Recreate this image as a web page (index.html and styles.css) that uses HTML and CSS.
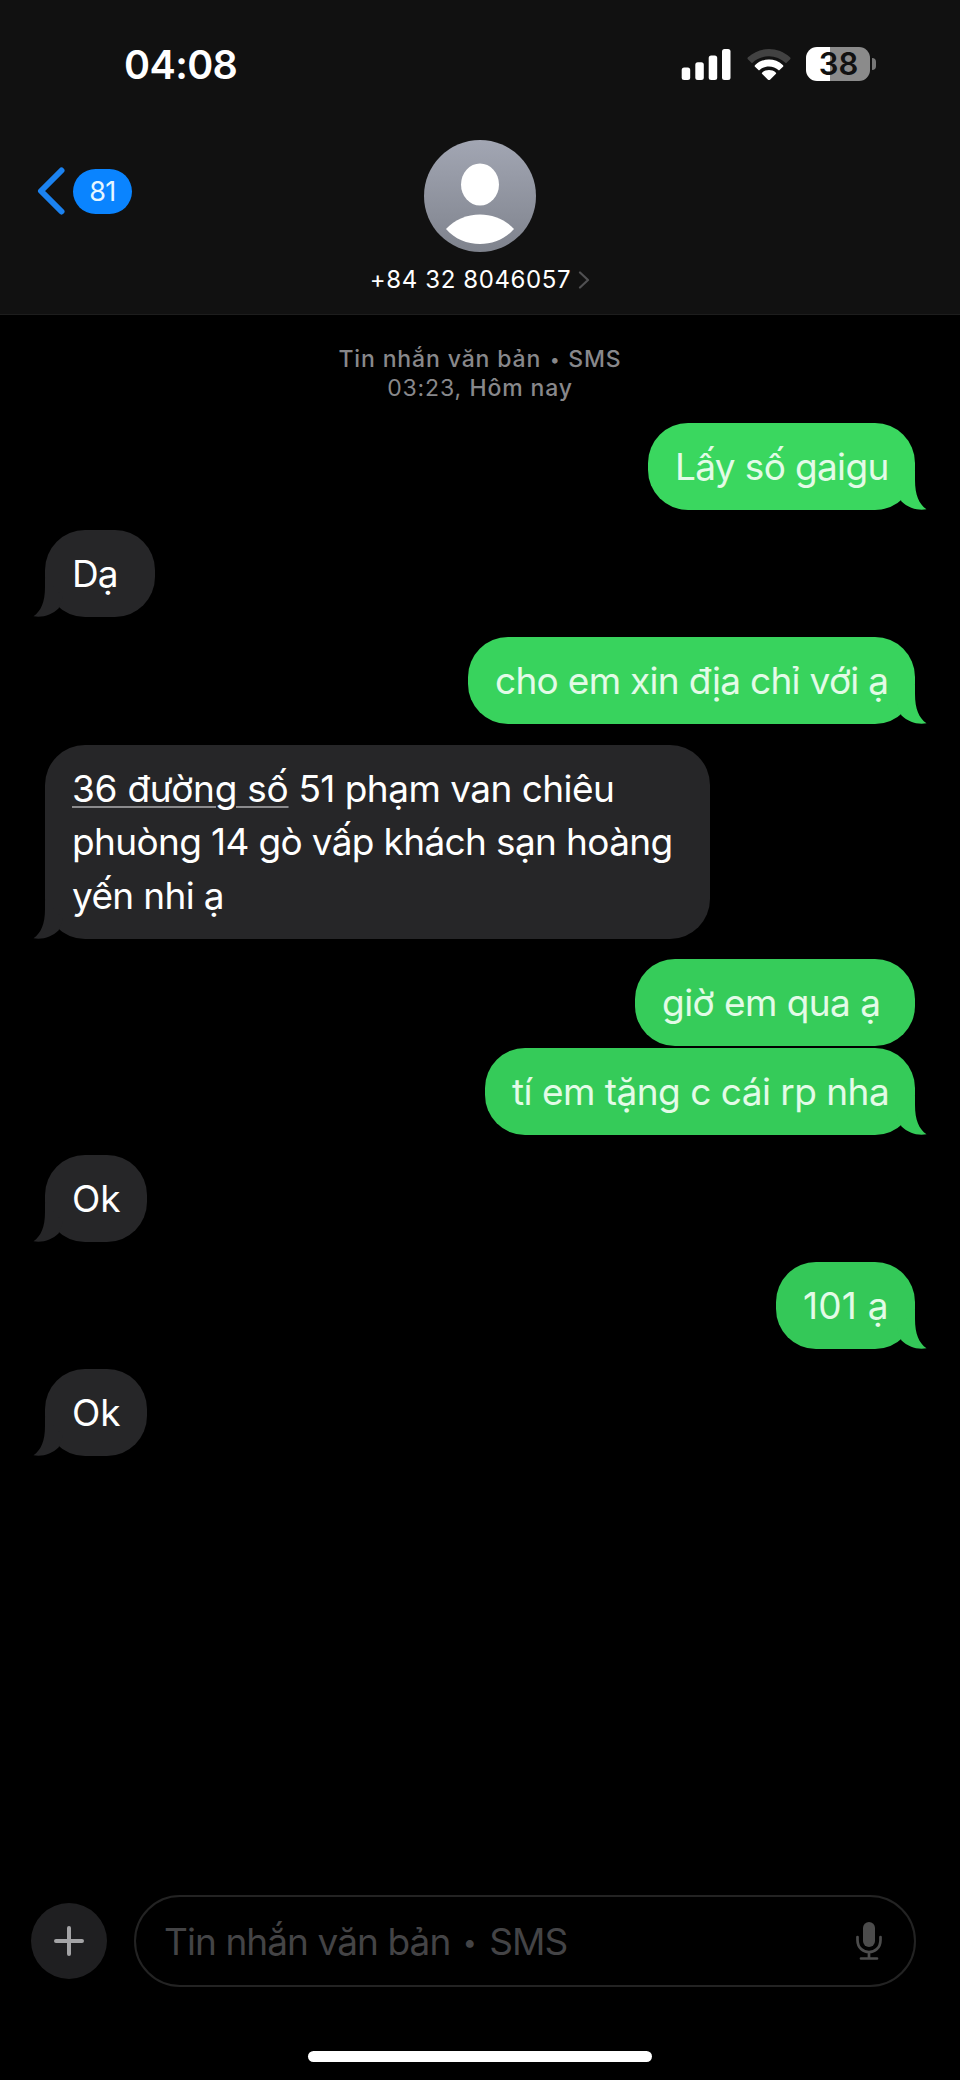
FILE: index.html
```
<!DOCTYPE html>
<html lang="vi">
<head>
<meta charset="utf-8">
<title>Tin nhắn</title>
<link rel="stylesheet" href="styles.css">
</head>
<body>
<svg width="0" height="0" class="defs" aria-hidden="true">
  <symbol id="tail" viewBox="0 0 32 40"><path d="M20 0V10C20 25 24 34 31.5 39.3C22 41 13 37.500 6.500 31.500L2 20Z"/></symbol>
</svg>
<div class="phone">
  <header class="header">
    <div class="status">
      <div class="time">04:08</div>
      <div class="indicators">
        <svg class="signal" width="50" height="32" viewBox="0 0 50 32" fill="#fff"><rect x="0.700" y="18.500" width="8.500" height="12.500" rx="2.500"/><rect x="14.300" y="13.300" width="8.500" height="17.700" rx="2.500"/><rect x="27.700" y="6.600" width="8.500" height="24.400" rx="2.500"/><rect x="41" y="0" width="8.500" height="31" rx="2.500"/></svg>
        <svg class="wifi" width="44" height="32" viewBox="0 0 44 32"><path fill="#424242" d="M5 14.200L0.800 10.200Q0 9.200 1 8.300C13-2.700 31-2.700 43 8.300Q44 9.200 43.200 10.200L39 14.200C29 5 15 5 5 14.200Z"/><path fill="#fff" d="M12 21.600L8 17.800Q7.200 16.800 8.200 15.900C16 8.600 28 8.600 35.800 15.900Q36.800 16.800 36 17.800L32 21.600C26 16 18 16 12 21.600Z"/><path fill="#fff" d="M21 30.700L15 24.700Q14.500 24 15.300 23.400C19 20.300 25 20.300 28.700 23.400Q29.500 24 29 24.700L23 30.700Q22 31.400 21 30.700Z"/></svg>
        <div class="battery"><div class="level">38</div><span class="cap"></span></div>
      </div>
    </div>
    <div class="nav">
      <div class="back">
        <svg width="28" height="48" viewBox="0 0 28 48"><path d="M24.500 3.500L4 24L24.500 44.500" fill="none" stroke="#1b82f0" stroke-width="6" stroke-linecap="round" stroke-linejoin="round"/></svg>
        <span class="count">81</span>
      </div>
      <div class="contact">
        <svg width="112" height="112" viewBox="0 0 112 112"><defs><linearGradient id="av" x2="0" y2="1"><stop stop-color="#a2a6b3"/><stop offset="1" stop-color="#7f838d"/></linearGradient></defs><circle cx="56" cy="56" r="56" fill="url(#av)"/><ellipse cx="56" cy="44.500" rx="19" ry="21" fill="#fff"/><path fill="#fff" d="M22 89C39 69.500 73 69.500 90 89C73 109 39 109 22 89Z"/></svg>
        <div class="number"><span>+84 32 8046057</span><svg width="12" height="18" viewBox="0 0 12 18"><path d="M2 1.500L10 9L2 16.500" fill="none" stroke="#505052" stroke-width="2.200" stroke-linecap="round" stroke-linejoin="round"/></svg></div>
      </div>
    </div>
  </header>
  <main class="thread">
    <div class="stamp"><span class="service">Tin nhắn văn bản <i class="dot">•</i> SMS</span><span class="date">03:23, <b>Hôm nay</b></span></div>
    <div class="bubble sent g1 w-gaigu"><span>Lấy số gaigu</span><svg class="tail"><use href="#tail"/></svg></div>
    <div class="bubble received w-da"><span>Dạ</span><svg class="tail"><use href="#tail"/></svg></div>
    <div class="bubble sent g2 w-cho"><span>cho em xin địa chỉ với ạ</span><svg class="tail"><use href="#tail"/></svg></div>
    <div class="bubble received w-address"><span class="l1"><u>36 đường số</u> 51 phạm van chiêu</span><span class="l2">phuòng 14 gò vấp khách sạn hoàng</span><span class="l3">yến nhi ạ</span><svg class="tail"><use href="#tail"/></svg></div>
    <div class="pair">
      <div class="bubble sent g3 w-gio"><span>giờ em qua ạ</span></div>
      <div class="bubble sent g4 w-ti"><span>tí em tặng c cái rp nha</span><svg class="tail"><use href="#tail"/></svg></div>
    </div>
    <div class="bubble received w-ok"><span>Ok</span><svg class="tail"><use href="#tail"/></svg></div>
    <div class="bubble sent g5 w-101"><span>101 ạ</span><svg class="tail"><use href="#tail"/></svg></div>
    <div class="bubble received w-ok"><span>Ok</span><svg class="tail"><use href="#tail"/></svg></div>
  </main>
  <footer class="composer">
    <div class="plus"><svg width="30" height="30" viewBox="0 0 30 30"><path d="M15 2V28M2 15H28" stroke="#a4a4a6" stroke-width="4" stroke-linecap="round"/></svg></div>
    <div class="field"><span>Tin nhắn văn bản <i class="dot">•</i> SMS</span><svg width="28" height="39" viewBox="0 0 28 39"><rect x="8" y="0" width="12" height="25" rx="6" fill="#4c4c4c"/><path d="M2.500 15V18C2.500 34 25.500 34 25.500 18V15M14 30V36M6 36.500H22" fill="none" stroke="#4c4c4c" stroke-width="2.700" stroke-linecap="round"/></svg></div>
  </footer>
  <div class="home"></div>
</div>
</body>
</html>
```
FILE: styles.css
```
* { box-sizing: border-box; }
body { margin: 0; background: #000; color: #fff; font-family: Inter, "Noto Sans", sans-serif; }
svg { display: block; flex: none; }
.defs { position: absolute; }
.phone { width: 960px; height: 2080px; display: flex; flex-direction: column; overflow: hidden; background: #000; }
.header { height: 315px; background: #111; border-bottom: 1px solid #1d1d1d; flex: none; }
.status { height: 140px; padding: 47px 84px 0 124px; display: flex; justify-content: space-between; align-items: flex-start; }
.time { font-size: 39.500px; line-height: 37px; font-weight: 600; letter-spacing: -0.600px; white-space: nowrap; }
.indicators { display: flex; height: 34px; }
.signal { margin-top: 2px; }
.wifi { margin: 2px 0 0 16px; }
.battery { display: flex; align-items: center; gap: 2px; margin-left: 15px; }
.level { width: 64px; height: 34px; padding-left: 1px; border-radius: 11px; background: linear-gradient(90deg, #fff 24.500px, #8b8b8b 24.500px); color: #111; font-size: 31px; line-height: 34px; font-weight: 600; text-align: center; }
.cap { width: 4px; height: 12px; border-radius: 0 5px 5px 0; background: #777; }
.nav { display: grid; grid-template-columns: 1fr 300px 1fr; }
.back { display: flex; align-items: center; height: 48px; margin: 27px 0 0 37px; gap: 8px; }
.count { width: 59px; height: 45px; border-radius: 23px; background: #0a84ff; font-size: 27px; line-height: 45px; letter-spacing: -0.500px; text-align: center; color: #e6f6ff; }
.contact { display: flex; flex-direction: column; align-items: center; }
.number { display: flex; align-items: center; gap: 7px; margin-top: 16px; font-size: 24px; line-height: 24px; letter-spacing: 0.600px; white-space: nowrap; }
.thread { flex: 1; padding: 30px 45px 0; display: flex; flex-direction: column; gap: 20.150px; }
.stamp { display: flex; flex-direction: column; align-items: center; font-size: 23px; line-height: 29px; letter-spacing: 0.870px; color: #88888b; height: 58px; white-space: nowrap; }
.service, .stamp b { font-weight: 500; }
.dot { display: inline-block; font-style: normal; line-height: 1; letter-spacing: 0; text-align: center; }
.stamp .dot { width: 13px; font-size: 18px; transform: translateY(-1.500px); }
.field .dot { width: 20px; font-size: 25px; transform: translateY(-4px); }
.bubble { position: relative; min-height: 87px; padding: 17px 27px 16.500px; border-radius: 40px; font-size: 37px; line-height: 53.500px; letter-spacing: -0.650px; white-space: nowrap; display: flex; flex-direction: column; }
.bubble > span { width: max-content; }
.sent { align-self: flex-end; background: currentColor; }
.sent > span { color: #e3fbe7; }
.received { align-self: flex-start; background: #262628; }
.tail { position: absolute; bottom: 0; width: 32px; height: 40px; }
.sent .tail { right: -12px; fill: currentColor; }
.received .tail { left: -12px; transform: scaleX(-1); fill: #262628; }
.g1 { color: #3ad75f; }
.g2 { color: #38d35d; }
.g3 { color: #36cc5a; }
.g4 { color: #35cb59; }
.g5 { color: #34c858; }
.pair { display: flex; flex-direction: column; gap: 2.300px; }
.w-gaigu { width: 267px; }
.w-da { width: 110px; letter-spacing: -1px; }
.w-cho { width: 447px; letter-spacing: -0.700px; }
.w-address { width: 665px; }
.w-gio { width: 280px; letter-spacing: -0.550px; }
.w-ti { width: 430px; letter-spacing: -0.520px; }
.w-ok { width: 102px; letter-spacing: 0; }
.w-101 { width: 139px; letter-spacing: 0.200px; }
.l1 { letter-spacing: -0.540px; }
u { letter-spacing: -0.250px; text-decoration-color: #8b8b8d; text-decoration-thickness: 2px; text-underline-offset: 4px; }
.composer { display: flex; align-items: center; height: 92px; padding: 0 44px 0 31px; gap: 27px; }
.plus { width: 76px; height: 76px; border-radius: 50%; background: #1f1f21; display: grid; place-items: center; flex: none; }
.field { flex: 1; height: 92px; border: 2px solid #232323; border-radius: 46px; padding: 0 31px 0 28px; display: flex; align-items: center; justify-content: space-between; font-size: 37px; letter-spacing: -0.930px; color: #444446; white-space: nowrap; }
.home { width: 344px; height: 11px; border-radius: 6px; background: #fff; margin: 64px auto 18px; flex: none; }
```
